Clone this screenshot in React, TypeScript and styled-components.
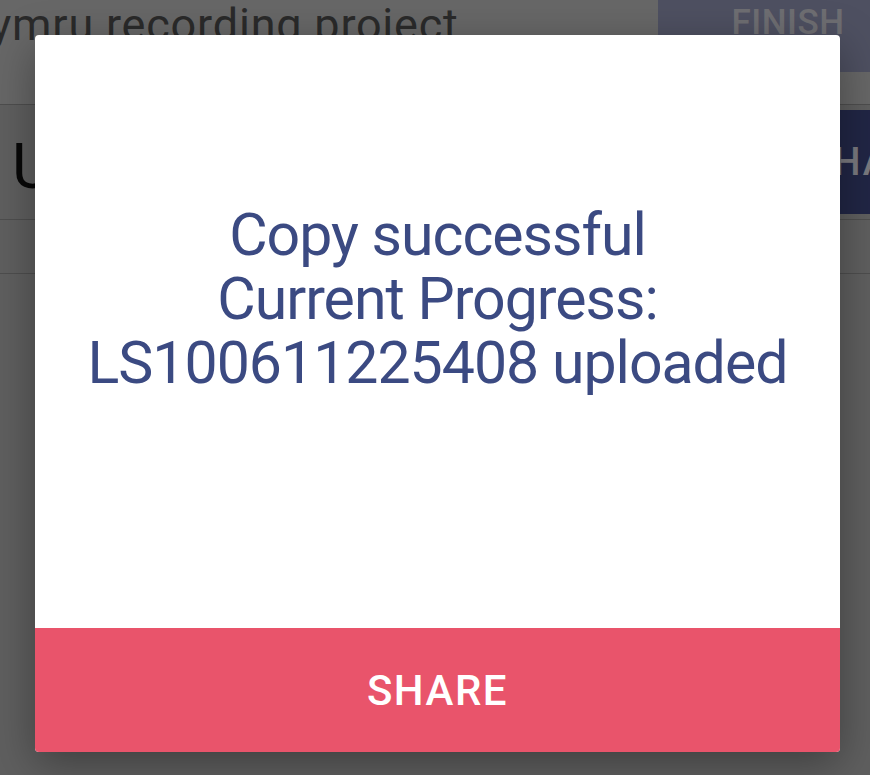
import React from "react";
import styled, { createGlobalStyle } from "styled-components";

const GlobalStyle = createGlobalStyle`
  html, body {
    margin: 0;
    padding: 0;
    width: 100%;
    height: 100%;
    overflow: hidden;
    background: #bebebe;
    font-family: Roboto, "Noto Sans", Arial, sans-serif;
  }
  #root { height: 100%; }
`;

const Screen = styled.div`
  position: relative;
  width: 100%;
  height: 100vh;
  overflow: hidden;
  background: #bebebe;
`;

const AppShell = styled.div`
  margin-top: -28px;
  width: 918px;
  display: flex;
  flex-direction: column;
`;

const Header = styled.header`
  height: 132px;
  background: #cecece;
  border-bottom: 1px solid #9c9c9c;
  display: flex;
  justify-content: space-between;
  align-items: flex-start;
`;

const Title = styled.h1`
  margin: 30px 0 0 -10px;
  font-size: 45px;
  line-height: 45px;
  font-weight: 400;
  letter-spacing: 0.8px;
  color: #555555;
  white-space: nowrap;
`;

const FinishButton = styled.button`
  width: 260px;
  height: 100px;
  border: none;
  background: #9ca0c2;
  color: #dcdce4;
  font-family: inherit;
  font-size: 35px;
  font-weight: 500;
  letter-spacing: 0.5px;
  display: flex;
  align-items: center;
  justify-content: center;
`;

const FieldRow = styled.div`
  height: 114px;
  border-bottom: 1px solid #9c9c9c;
  display: flex;
  justify-content: space-between;
  align-items: center;
`;

const BigLetter = styled.span`
  margin: 8px 0 0 12px;
  font-size: 63px;
  line-height: 63px;
  color: #101010;
`;

const NavyButton = styled.button`
  width: 200px;
  height: 104px;
  margin-right: -56px;
  border: none;
  background: #424c8a;
  color: #f4f4ff;
  font-family: inherit;
  font-size: 38px;
  font-weight: 500;
  letter-spacing: 2px;
`;

const EmptyRow = styled.div`
  height: 53px;
  border-bottom: 1px solid #9c9c9c;
`;

const Overlay = styled.div`
  position: absolute;
  inset: 0;
  background: rgba(0, 0, 0, 0.5);
  padding: 35px 30px 0 35px;
  display: flex;
  align-items: flex-start;
  justify-content: flex-start;
`;

const Dialog = styled.div`
  width: 805px;
  height: 717px;
  background: #ffffff;
  border-radius: 4px;
  overflow: hidden;
  display: flex;
  flex-direction: column;
  box-shadow: 0 12px 44px rgba(0, 0, 0, 0.35);
`;

const Message = styled.div`
  flex: 1;
  padding-top: 168px;
  text-align: center;
  font-size: 59px;
  line-height: 64px;
  letter-spacing: -1px;
  color: #3b4a82;
`;

const ShareButton = styled.button`
  height: 124px;
  border: none;
  background: #e9546b;
  color: #ffffff;
  font-family: inherit;
  font-size: 42px;
  font-weight: 500;
  letter-spacing: 1.5px;
  display: flex;
  align-items: center;
  justify-content: center;
`;

export default function App() {
  return (
    <Screen>
      <GlobalStyle />
      <AppShell>
        <Header>
          <Title>ymru recording project</Title>
          <FinishButton>FINISH</FinishButton>
        </Header>
        <FieldRow>
          <BigLetter>U</BigLetter>
          <NavyButton>SHARE</NavyButton>
        </FieldRow>
        <EmptyRow />
      </AppShell>
      <Overlay>
        <Dialog>
          <Message>
            Copy successful
            <br />
            Current Progress:
            <br />
            LS100611225408 uploaded
          </Message>
          <ShareButton>SHARE</ShareButton>
        </Dialog>
      </Overlay>
    </Screen>
  );
}
